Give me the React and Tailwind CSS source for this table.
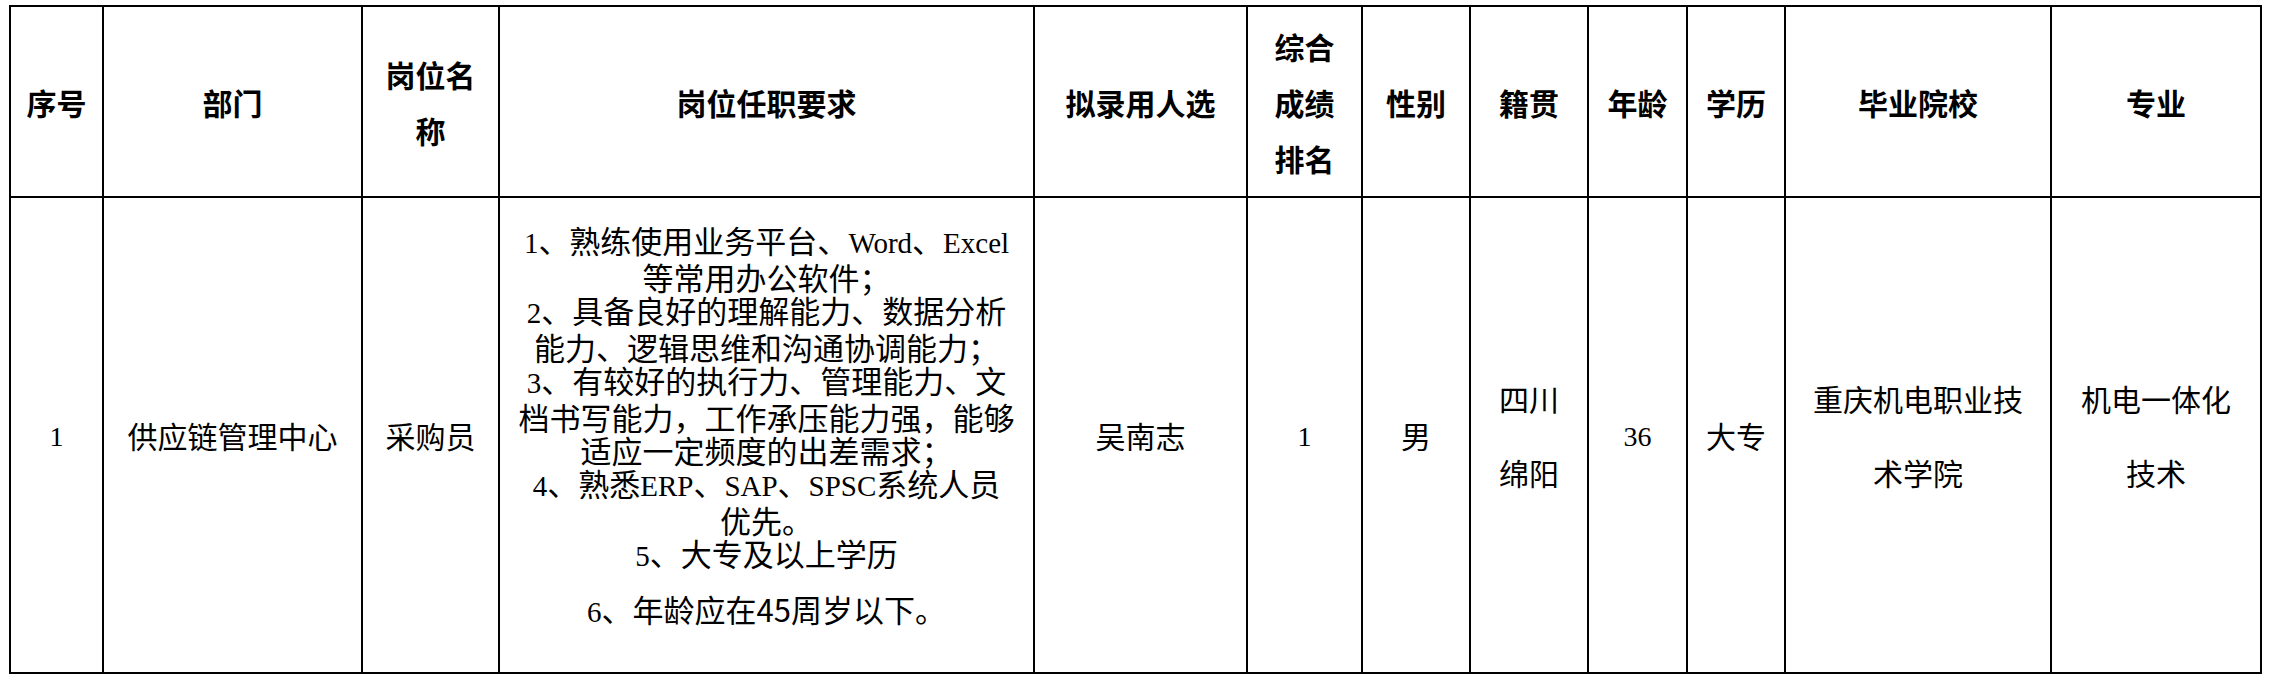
import React from 'react';

const sans = "font-['Noto_Sans_CJK_SC',sans-serif]";

// latin text in the body is set in a Times-like face
const L = ({ children, big }) => (
  <span className={`font-['Liberation_Serif',serif] ${big ? 'text-[29px]' : 'text-[28px]'}`}>{children}</span>
);

const Head = ({ children }) => (
  <div className={`bg-white flex items-center justify-center text-center ${sans} font-bold text-[30px] leading-[56px] text-black`}>
    <div>{children}</div>
  </div>
);

const Cell = ({ children, className = '' }) => (
  <div className={`bg-white flex items-center justify-center text-center ${sans} text-[30px] leading-[74px] text-black ${className}`}>
    <div>{children}</div>
  </div>
);

const requirements = [
  <><L big>1</L>、熟练使用业务平台、<L big>Word</L>、<L big>Excel</L></>,
  <>等常用办公软件；</>,
  <><L big>2</L>、具备良好的理解能力、数据分析</>,
  <>能力、逻辑思维和沟通协调能力；</>,
  <><L big>3</L>、有较好的执行力、管理能力、文</>,
  <>档书写能力，工作承压能力强，能够</>,
  <>适应一定频度的出差需求；</>,
  <><L big>4</L>、熟悉<L big>ERP</L>、<L big>SAP</L>、<L big>SPSC</L>系统人员</>,
  <>优先。</>,
  <><L big>5</L>、大专及以上学历</>,
];

const App = () => {
  return (
    <div className="w-[2275px] h-[682px] bg-white pt-[5px] pl-[9px]">
      <div className="grid w-max grid-cols-[91px_257px_135px_533px_211px_113px_106px_116px_97px_96px_264px_208px] grid-rows-[189px_474px] gap-[2px] p-[2px] bg-black">
        <Head>序号</Head>
        <Head>部门</Head>
        <Head>岗位名<br />称</Head>
        <Head>岗位任职要求</Head>
        <Head>拟录用人选</Head>
        <Head>综合<br />成绩<br />排名</Head>
        <Head>性别</Head>
        <Head>籍贯</Head>
        <Head>年龄</Head>
        <Head>学历</Head>
        <Head>毕业院校</Head>
        <Head>专业</Head>

        <Cell><L>1</L></Cell>
        <Cell>供应链管理中心</Cell>
        <Cell>采购员</Cell>
        <div className={`bg-white flex items-center justify-center pb-[18px] text-center ${sans} text-[31px] leading-[33px] text-black`}>
          <div>
            {requirements.map((line, i) => (
              <div key={i} className="whitespace-nowrap">{line}</div>
            ))}
            <div className="whitespace-nowrap mt-[19px]">
              <L big>6</L>、年龄应在45周岁以下。
            </div>
          </div>
        </div>
        <Cell>吴南志</Cell>
        <Cell><L>1</L></Cell>
        <Cell>男</Cell>
        <Cell>四川<br />绵阳</Cell>
        <Cell><L>36</L></Cell>
        <Cell>大专</Cell>
        <Cell>重庆机电职业技<br />术学院</Cell>
        <Cell>机电一体化<br />技术</Cell>
      </div>
    </div>
  );
};

export default App;
